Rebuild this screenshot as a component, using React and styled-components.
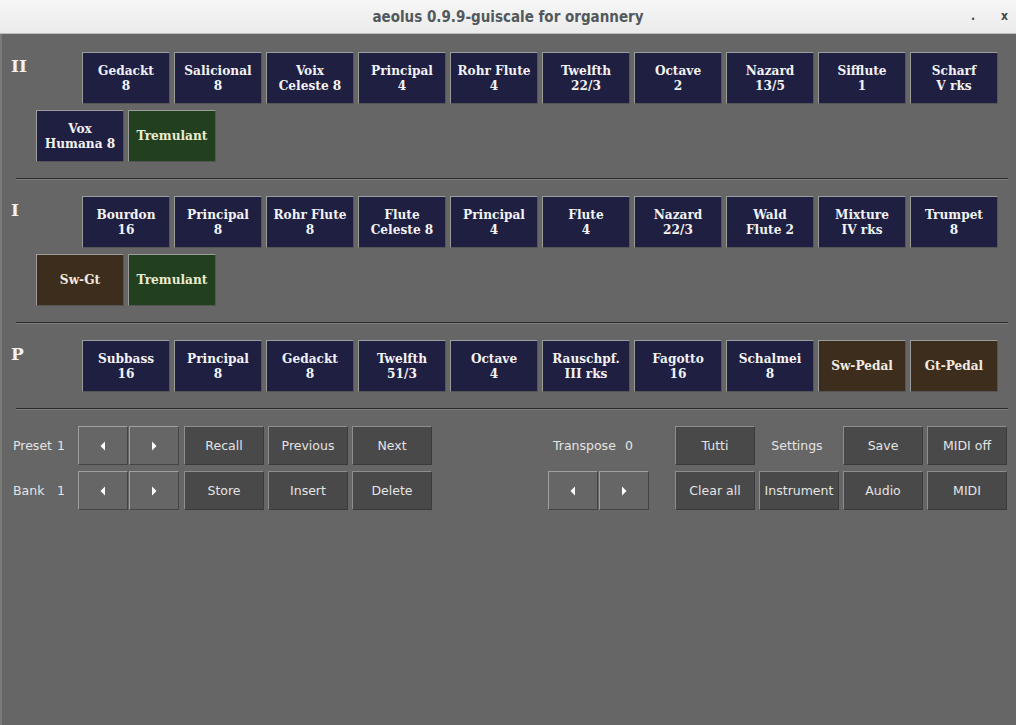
import React from 'react';
import styled, { createGlobalStyle } from 'styled-components';

const GlobalStyle = createGlobalStyle`
  html, body {
    margin: 0;
    padding: 0;
    background: #666666;
  }
`;

const Window = styled.div`
  width: 1016px;
  height: 725px;
  display: flex;
  flex-direction: column;
  background: #666666;
  overflow: hidden;
`;

const TitleBar = styled.div`
  height: 33px;
  flex: none;
  display: flex;
  align-items: center;
  justify-content: center;
  position: relative;
  background: linear-gradient(#f6f6f6, #ebebeb);
  border-bottom: 1px solid #bcbcbc;
  font-family: "DejaVu Sans Condensed", "DejaVu Sans", sans-serif;
  font-stretch: condensed;
  font-weight: bold;
  font-size: 15px;
  color: #52595c;
`;

const WinButtons = styled.div`
  position: absolute;
  right: 8px;
  top: 9px;
  display: flex;
  gap: 26px;
  font-size: 12px;
  color: #444;
`;

const Body = styled.div`
  flex: 1;
  border-left: 2px solid #7a7a7a;
  display: flex;
  flex-direction: column;
`;

const Section = styled.div`
  padding: ${({ first }) => (first ? '18px' : '16px')} 0 16px 9px;
  display: flex;
  flex-direction: column;
  gap: 6px;
`;

const StopRow = styled.div`
  display: flex;
  align-items: flex-start;
  gap: 4px;
  padding-left: ${({ indent }) => indent || 0}px;
`;

const DivLabel = styled.div`
  width: 67px;
  padding-top: 4px;
  font-family: "DejaVu Serif", serif;
  font-weight: bold;
  font-size: 17px;
  color: #f2f2f2;
`;

const stopColors = {
  stop: { bg: '#1f1f42', fg: '#f2f2f2' },
  trem: { bg: '#22401f', fg: '#ecebcf' },
  coup: { bg: '#3d2d1d', fg: '#f3ebdf' },
};

const Stop = styled.div`
  width: 88px;
  height: 52px;
  box-sizing: border-box;
  display: flex;
  align-items: center;
  justify-content: center;
  text-align: center;
  white-space: pre-line;
  background: ${({ kind }) => stopColors[kind].bg};
  color: ${({ kind }) => stopColors[kind].fg};
  border-top: 1px solid #9c9c9c;
  border-left: 1px solid #9c9c9c;
  border-right: 1px solid #555;
  border-bottom: 1px solid #555;
  font-family: "DejaVu Serif Condensed", "DejaVu Serif", serif;
  font-stretch: condensed;
  font-weight: bold;
  font-size: 13.5px;
  line-height: 15px;
  padding-bottom: 1px;
`;

const Separator = styled.div`
  margin: 0 8px 0 14px;
  height: 0;
  border-top: 1px solid #2c2c2c;
  border-bottom: 1px solid #7e7e7e;
`;

const Controls = styled.div`
  padding: 16px 0 0 11px;
  display: flex;
  flex-direction: column;
  gap: 6px;
`;

const ControlRow = styled.div`
  display: flex;
  align-items: center;
  height: 39px;
`;

const CtlLabel = styled.div`
  width: ${({ w }) => w}px;
  margin-left: ${({ ml }) => ml || 0}px;
  display: flex;
  justify-content: ${({ center }) => (center ? 'center' : 'flex-start')};
  font-family: "DejaVu Sans", sans-serif;
  font-size: 12.5px;
  color: #e4e4e4;
  white-space: pre;
`;

const LabelName = styled.span`
  width: ${({ w }) => w}px;
`;

const Button = styled.div`
  width: 80px;
  height: 39px;
  box-sizing: border-box;
  margin-left: ${({ ml }) => (ml === undefined ? 4 : ml)}px;
  display: flex;
  align-items: center;
  justify-content: center;
  background: #494949;
  border-top: 1px solid #8e8e8e;
  border-left: 1px solid #8e8e8e;
  border-right: 1px solid #3a3a3a;
  border-bottom: 1px solid #3a3a3a;
  font-family: "DejaVu Sans", sans-serif;
  font-size: 12.5px;
  color: #e4e4e4;
`;

const ArrowButton = styled.div`
  width: 50px;
  height: 39px;
  box-sizing: border-box;
  margin-left: ${({ ml }) => ml || 0}px;
  display: flex;
  align-items: center;
  justify-content: center;
  background: #666666;
  border-top: 1px solid #a0a0a0;
  border-left: 1px solid #a0a0a0;
  border-right: 1px solid #444;
  border-bottom: 1px solid #444;
`;

const Arrow = ({ dir }) => (
  <svg width="6" height="10" viewBox="0 0 6 10">
    {dir === 'left' ? (
      <polygon points="5,0.5 5,9.5 0.5,5" fill="#ffffff" />
    ) : (
      <polygon points="1,0.5 1,9.5 5.5,5" fill="#ffffff" />
    )}
  </svg>
);

const ArrowPair = ({ ml }) => (
  <>
    <ArrowButton ml={ml}><Arrow dir="left" /></ArrowButton>
    <ArrowButton ml={1}><Arrow dir="right" /></ArrowButton>
  </>
);

const divisions = [
  {
    label: 'II',
    main: [
      ['Gedackt\n8'], ['Salicional\n8'], ['Voix\nCeleste 8'], ['Principal\n4'], ['Rohr Flute\n4'],
      ['Twelfth\n22/3'], ['Octave\n2'], ['Nazard\n13/5'], ['Sifflute\n1'], ['Scharf\nV rks'],
    ],
    extra: [['Vox\nHumana 8'], ['Tremulant', 'trem']],
  },
  {
    label: 'I',
    main: [
      ['Bourdon\n16'], ['Principal\n8'], ['Rohr Flute\n8'], ['Flute\nCeleste 8'], ['Principal\n4'],
      ['Flute\n4'], ['Nazard\n22/3'], ['Wald\nFlute 2'], ['Mixture\nIV rks'], ['Trumpet\n8'],
    ],
    extra: [['Sw-Gt', 'coup'], ['Tremulant', 'trem']],
  },
  {
    label: 'P',
    main: [
      ['Subbass\n16'], ['Principal\n8'], ['Gedackt\n8'], ['Twelfth\n51/3'], ['Octave\n4'],
      ['Rauschpf.\nIII rks'], ['Fagotto\n16'], ['Schalmei\n8'], ['Sw-Pedal', 'coup'], ['Gt-Pedal', 'coup'],
    ],
    extra: null,
  },
];

export default function App() {
  return (
    <>
      <GlobalStyle />
      <Window>
        <TitleBar>
          aeolus 0.9.9-guiscale for organnery
          <WinButtons>
            <span>.</span>
            <span>x</span>
          </WinButtons>
        </TitleBar>
        <Body>
          {divisions.map((d, i) => (
            <React.Fragment key={d.label}>
              <Section first={i === 0}>
                <StopRow>
                  <DivLabel>{d.label}</DivLabel>
                  {d.main.map(([name, kind], j) => (
                    <Stop key={j} kind={kind || 'stop'}>{name}</Stop>
                  ))}
                </StopRow>
                {d.extra && (
                  <StopRow indent={25}>
                    {d.extra.map(([name, kind], j) => (
                      <Stop key={j} kind={kind || 'stop'}>{name}</Stop>
                    ))}
                  </StopRow>
                )}
              </Section>
              <Separator />
            </React.Fragment>
          ))}
          <Controls>
            <ControlRow>
              <CtlLabel w={65}><LabelName w={44}>Preset</LabelName>1</CtlLabel>
              <ArrowPair />
              <Button ml={5}>Recall</Button>
              <Button>Previous</Button>
              <Button>Next</Button>
              <CtlLabel w={122} ml={121}><LabelName w={72}>Transpose</LabelName>0</CtlLabel>
              <Button ml={0}>Tutti</Button>
              <CtlLabel w={84} center>Settings</CtlLabel>
              <Button ml={4}>Save</Button>
              <Button>MIDI off</Button>
            </ControlRow>
            <ControlRow>
              <CtlLabel w={65}><LabelName w={44}>Bank</LabelName>1</CtlLabel>
              <ArrowPair />
              <Button ml={5}>Store</Button>
              <Button>Insert</Button>
              <Button>Delete</Button>
              <ArrowPair ml={116} />
              <Button ml={26}>Clear all</Button>
              <Button>Instrument</Button>
              <Button>Audio</Button>
              <Button>MIDI</Button>
            </ControlRow>
          </Controls>
        </Body>
      </Window>
    </>
  );
}
